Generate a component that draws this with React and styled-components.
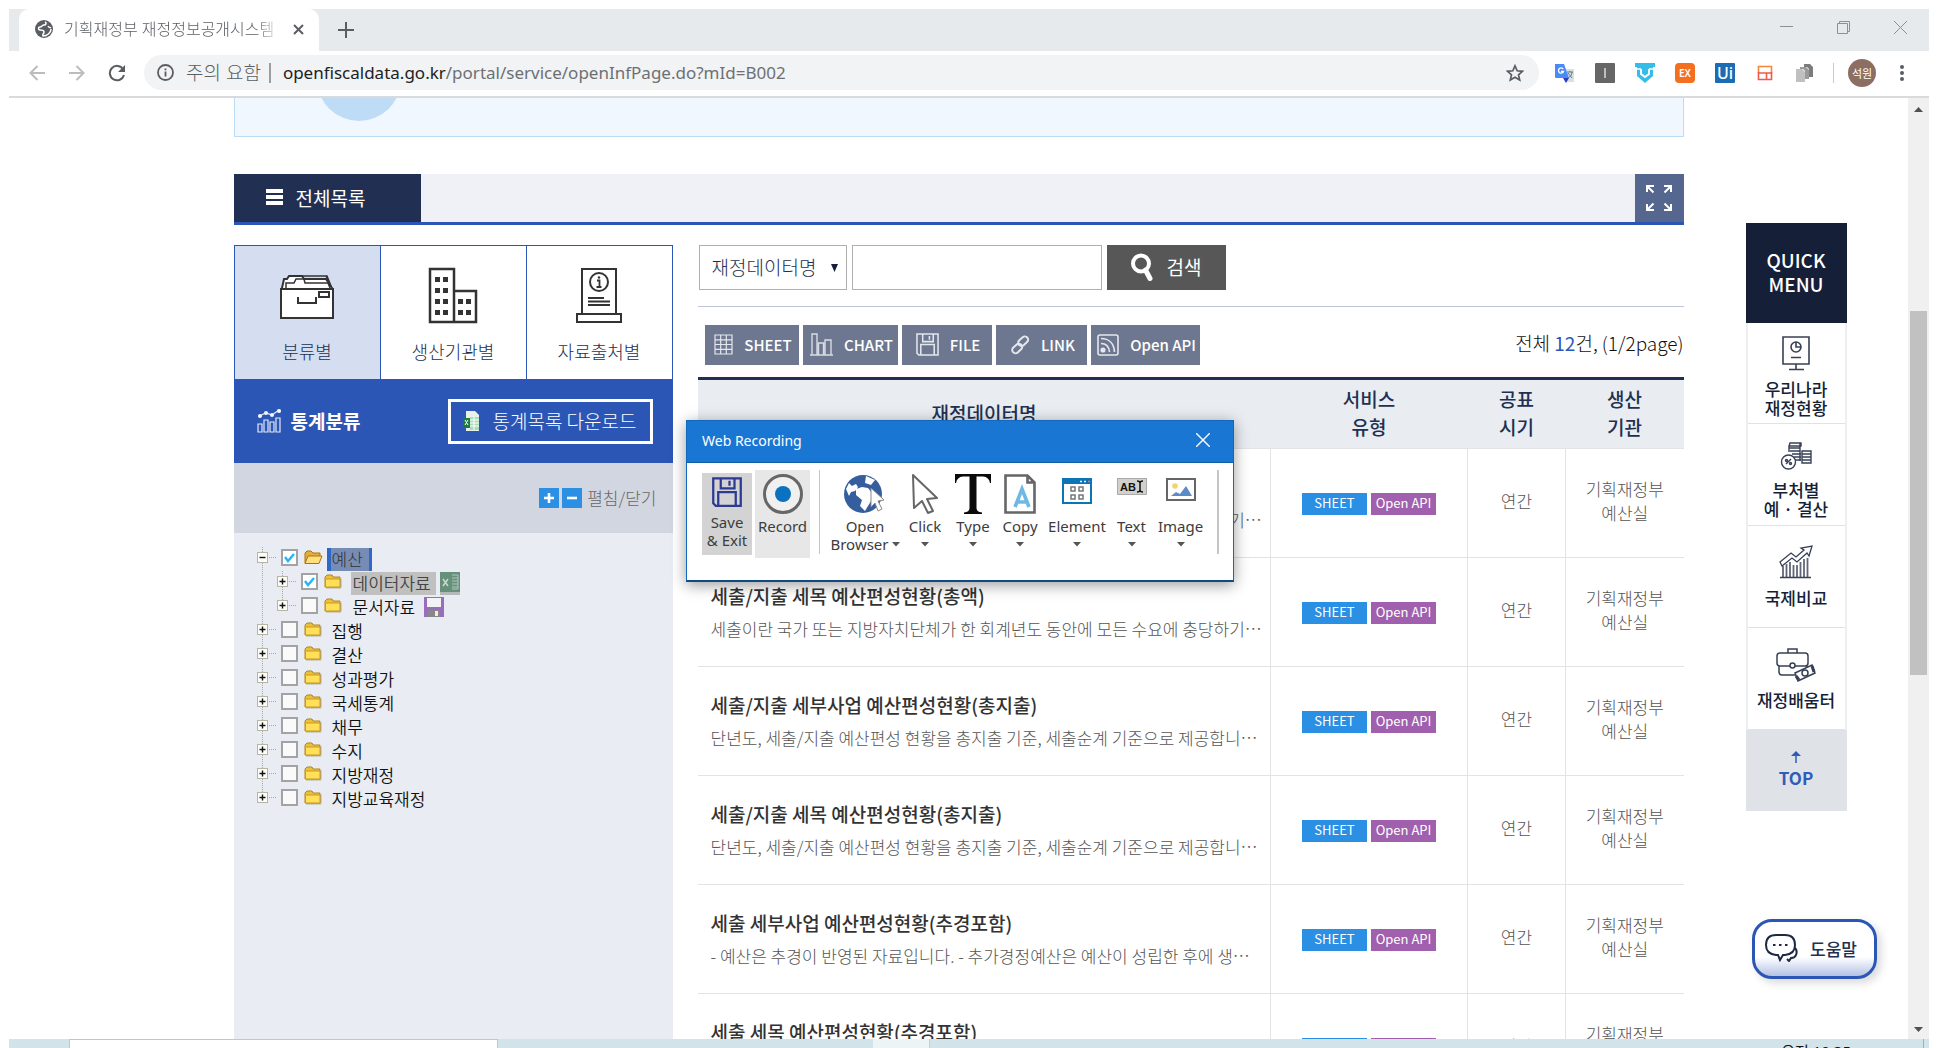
import React from "react";
import styled, { createGlobalStyle, css } from "styled-components";

const KR = `"Noto Sans CJK KR", sans-serif`;
const UI = `"Noto Sans", "Noto Sans CJK KR", sans-serif`;

const Global = createGlobalStyle`
  * { box-sizing: border-box; }
  body { margin: 0; background: #fff; font-family: ${KR}; }
  button, input, select { font-family: inherit; margin: 0; }
  button { border: 0; padding: 0; background: none; color: inherit; display: flex; align-items: center; justify-content: center; }
  svg { display: block; flex: none; }
  ul { list-style: none; margin: 0; padding: 0; }
  a { text-decoration: none; color: inherit; }
`;

/* ---------- browser frame ---------- */
const Frame = styled.div`
  height: 100vh;
  padding: 9px 9px 0;
  display: flex;
  flex-direction: column;
  overflow: hidden;
`;
const TabStrip = styled.header`
  flex: none;
  height: 42px;
  display: flex;
  background: #e6eaed;
  font-family: ${UI};
`;
const Tab = styled.div`
  width: 300px;
  margin-left: 10px;
  padding: 0 15px 2px 16px;
  border-radius: 10px 10px 0 0;
  background: #fff;
  display: flex;
  align-items: center;
  gap: 11px;
  color: #5a5e63;
`;
const TabTitle = styled.span`
  flex: 1;
  font-size: 16px;
  font-weight: 300;
  line-height: 24px;
  white-space: nowrap;
  overflow: hidden;
  mask-image: linear-gradient(90deg, #000 88%, transparent);
`;
const NewTab = styled.button`
  width: 54px;
  color: #5a5e63;
`;
const WindowButtons = styled.div`
  margin-left: auto;
  display: flex;
  align-items: center;
  gap: 44px;
  padding: 0 22px 6px 0;
  color: #8d9093;
`;
const AddressBar = styled.div`
  flex: none;
  height: 47px;
  padding: 0 25px 2px 16px;
  border-bottom: 2px solid #d8dade;
  display: flex;
  align-items: center;
  gap: 16px;
  color: #5a5e63;
  font-family: ${UI};
`;
const NavButton = styled.button`
  width: 24px;
  height: 24px;
  color: ${(p) => (p.$muted ? "#babcbe" : "#5a5e63")};
`;
const Omnibox = styled.div`
  flex: 1;
  height: 35px;
  border-radius: 18px;
  background: #f1f3f4;
  display: flex;
  align-items: center;
  padding: 0 15px 0 13px;
  margin-left: -1px;
  gap: 12px;
  font-size: 17px;
  line-height: 24px;
  white-space: nowrap;
`;
const SiteNotice = styled.span`
  font-size: 19px;
  font-weight: 300;
`;
const UrlText = styled.span`
  flex: 1;
  border-left: 2px solid #9b9ea1;
  padding-left: 12px;
  margin-left: -4px;
  line-height: 20px;
  color: #6c7074;
  b { font-weight: 400; color: #202124; }
`;
const Extensions = styled.div`
  display: flex;
  align-items: center;
  gap: 20px;
`;
const Avatar = styled.span`
  width: 28px;
  height: 28px;
  border-radius: 50%;
  background: #8d6e63;
  color: #fff;
  font-size: 11px;
  display: flex;
  align-items: center;
  justify-content: center;
`;
const BarRule = styled.i`
  width: 1px;
  height: 20px;
  background: #c8cacc;
  margin-left: -2px;
  margin-right: -6px;
`;

/* ---------- page ---------- */
const Viewport = styled.div`
  flex: 1;
  min-height: 0;
  display: flex;
`;
const Page = styled.div`
  flex: 1;
  min-width: 0;
  overflow: hidden;
  display: grid;
  grid-template-columns: minmax(0, 1fr) minmax(0, 1450px) minmax(0, 1fr);
`;
const Main = styled.main`
  grid-column: 2;
  display: flex;
  flex-direction: column;
  min-height: 0;
`;
const ScrollTrack = styled.div`
  width: 21px;
  background: #f0f0f0;
  display: flex;
  flex-direction: column;
  align-items: center;
  padding: 9px 2px 7px;
  color: #505050;
`;
const ScrollThumb = styled.div`
  width: 17px;
  height: 364px;
  margin-top: 199px;
  margin-bottom: auto;
  background: #c1c1c1;
`;
const Banner = styled.div`
  flex: none;
  height: 39px;
  overflow: hidden;
  background: #f0f7ff;
  border: 1px solid #bcdcf5;
  border-top: 0;
  padding-left: 82px;
`;
const BannerDisc = styled.div`
  width: 84px;
  height: 84px;
  margin-top: -61px;
  border-radius: 50%;
  background: #bfdcf7;
`;
const SectionBar = styled.div`
  flex: none;
  margin-top: 37px;
  height: 51px;
  display: flex;
  justify-content: space-between;
  background: #eff1f6;
  border-bottom: 3px solid #2c56b5;
`;
const SectionTab = styled.h2`
  margin: 0;
  width: 187px;
  padding: 0 0 2px 32px;
  background: #213052;
  color: #fff;
  display: flex;
  align-items: center;
  gap: 13px;
  font-size: 19px;
  font-weight: 400;
`;
const Expand = styled.button`
  width: 49px;
  background: #56678f;
`;
const Columns = styled.div`
  flex: 1;
  min-height: 0;
  margin-top: 20px;
  display: flex;
  gap: 25px;
`;

/* ---------- left column ---------- */
const Side = styled.section`
  width: 439px;
  flex: none;
  display: flex;
  flex-direction: column;
  background: #e9edf3;
`;
const KindTabs = styled.div`
  display: grid;
  grid-template-columns: repeat(3, 1fr);
  gap: 1px;
  padding: 1px 1px 0;
  background: #2c56b5;
`;
const KindTab = styled.button`
  height: 133px;
  padding-top: 18px;
  flex-direction: column;
  justify-content: flex-start;
  gap: 13px;
  background: ${(p) => (p.$on ? "#d5ddf0" : "#fff")};
  color: #213052;
  font-size: 18px;
  line-height: 28px;
  font-weight: 300;
`;
const Blue = styled.div`
  height: 84px;
  padding: 0 20px 0 23px;
  background: #2c56b5;
  color: #fff;
  display: flex;
  align-items: center;
  gap: 10px;
  h3 { margin: 0; padding-bottom: 2px; font-size: 19px; font-weight: 700; }
`;
const Download = styled.button`
  width: 205px;
  height: 45px;
  margin-left: auto;
  padding-bottom: 1px;
  border: 3px solid #fff;
  gap: 13px;
  font-size: 19px;
  font-weight: 300;
  white-space: nowrap;
`;
const Toggle = styled.div`
  height: 70px;
  padding-right: 16px;
  background: #d2d6e0;
  display: flex;
  align-items: center;
  justify-content: flex-end;
  gap: 3px;
  color: #666;
  font-size: 17px;
  font-weight: 300;
  span { margin: 0 0 2px 2px; }
`;
const Square = styled.button`
  width: 20px;
  height: 20px;
  background: #2b90e3;
`;
const Tree = styled.ul`
  padding: 14px 0 0 21px;
  font-size: 17px;
  line-height: 24px;
`;
const TreeRow = styled.li`
  height: 24px;
  display: flex;
  align-items: center;
  padding-left: ${(p) => (p.$level ? 20 : 0)}px;
  background-image: ${(p) =>
    p.$level ? "repeating-linear-gradient(#aaa 0 1px, transparent 1px 2px)" : "none"};
  background-size: 1px 100%;
  background-position: 7px 0;
  background-repeat: no-repeat;
`;
const Check = styled.input`
  appearance: none;
  width: 17px;
  height: 17px;
  border: 2px solid #a3a3a3;
  background: #fafafa;
  flex: none;
  &&& { margin: 0 6px 3px 4px; }
  &:checked {
    background: #fff
      url("data:image/svg+xml,%3Csvg xmlns='http://www.w3.org/2000/svg' viewBox='0 0 13 13'%3E%3Cpath d='M2 6l3 4 6-7' fill='none' stroke='%2322b8f5' stroke-width='2.4'/%3E%3C/svg%3E");
  }
`;
const FolderBox = styled.span`
  margin-bottom: 4px;
`;
const TreeLabel = styled.label`
  margin-left: 4px;
  padding: 0 5px;
  height: 23px;
  line-height: 22px;
  color: #111;
  font-weight: ${(p) => (p.$state === "selected" ? 300 : 350)};
  ${(p) => p.$state === "selected" && css`
    background: #768cb4;
    border: solid #2f69c8;
    border-width: 0 3px 0 4px;
    color: #333;
    padding: 0 6px 0 1px;
  `}
  ${(p) => p.$state === "marked" && css`
    background: #c0c0c0;
    color: #444;
    padding: 0 5px 0 2px;
    margin-left: 8px;
  `}
  ${(p) => p.$state === "plain" && css`
    padding: 0 5px 0 2px;
    margin-left: 8px;
  `}
`;
const Tail = styled.span`
  margin-left: 4px;
`;

/* ---------- right column ---------- */
const Content = styled.section`
  flex: 1;
  min-width: 0;
  overflow: hidden;
`;
const SearchForm = styled.form`
  display: flex;
  gap: 5px;
  padding: 0 0 16px 1px;
  border-bottom: 1px solid #bfc5d8;
`;
const SelectWrap = styled.div`
  display: grid;
  width: 148px;
  height: 45px;
  border: 1px solid #b0b0b0;
  align-items: center;
  > * { grid-area: 1 / 1; }
  svg { justify-self: end; margin-right: 8px; pointer-events: none; }
`;
const Select = styled.select`
  appearance: none;
  height: 43px;
  border: 0;
  background: transparent;
  padding: 0 0 2px 12px;
  font-size: 19px;
  font-weight: 300;
  color: #213052;
`;
const Field = styled.input`
  width: 250px;
  height: 45px;
  border: 1px solid #b0b0b0;
  padding: 0 10px;
  font-size: 17px;
`;
const SearchButton = styled.button`
  width: 119px;
  height: 45px;
  padding-bottom: 2px;
  background: #575757;
  color: #fff;
  font-size: 19px;
  gap: 14px;
`;
const Tools = styled.div`
  display: flex;
  align-items: center;
  padding: 18px 0 12px 7px;
  gap: 4px;
`;
const Tool = styled.button`
  width: ${(p) => p.$w}px;
  height: 40px;
  padding: 0 0 1px 3px;
  background: #6d7890;
  color: #fff;
  font-size: 15px;
  font-weight: 500;
  gap: 11px;
`;
const Count = styled.p`
  margin: 0 0 4px auto;
  font-size: 19px;
  line-height: 28px;
  color: #111;
  font-weight: 300;
  b { color: #2c56b5; font-weight: 400; }
`;
const Table = styled.table`
  width: 100%;
  border-collapse: collapse;
  table-layout: fixed;
  border-top: 3px solid #213052;
`;
const Th = styled.th`
  height: 70px;
  padding: 0 0 3px;
  background: #e9edf1;
  border-bottom: 1px solid #e3e3e6;
  color: #213052;
  font-size: 19px;
  line-height: 28px;
  font-weight: 500;
`;
const Td = styled.td`
  height: 109px;
  padding: 0 0 4px;
  border-bottom: 1px solid #e3e3e6;
  border-left: 1px solid #e3e3e6;
  text-align: center;
  font-size: 17px;
  line-height: 24px;
  font-weight: 300;
  color: #555;
  &:first-child { border-left: 0; text-align: left; padding: 0 12px 0 13px; }
`;
const DataTitle = styled.a`
  display: block;
  font-size: 19px;
  line-height: 32px;
  font-weight: 500;
  color: #333;
  white-space: nowrap;
`;
const DataNote = styled.p`
  margin: 0;
  font-size: 17px;
  line-height: 33px;
  color: #555;
  white-space: nowrap;
`;
const Badges = styled.div`
  display: flex;
  justify-content: center;
  gap: 4px;
  padding-top: 6px;
`;
const Badge = styled.a`
  width: 65px;
  height: 22px;
  line-height: 20px;
  font-size: 13px;
  font-weight: 400;
  color: #fff;
  background: ${(p) => (p.$api ? "#a160ad" : "#2b90e3")};
`;

/* ---------- quick menu ---------- */
const Quick = styled.aside`
  grid-column: 3;
  padding: 125px 0 0 62px;
`;
const QuickNav = styled.nav`
  width: 101px;
  border: solid #edeef2;
  border-width: 0 2px;
`;
const QuickHead = styled.h2`
  margin: 0 -2px;
  height: 100px;
  padding-bottom: 2px;
  display: flex;
  align-items: center;
  justify-content: center;
  text-align: center;
  background: #151f38;
  color: #fff;
  font-size: 19px;
  line-height: 24px;
  font-weight: 500;
`;
const QuickItem = styled.a`
  height: ${(p) => (p.$first ? 101 : 102)}px;
  padding-top: ${(p) => (p.$single ? 18 : 12)}px;
  border-bottom: 1px solid #dfe2e7;
  display: flex;
  flex-direction: column;
  align-items: center;
  gap: 8px;
  text-align: center;
  white-space: pre-line;
  font-size: 17px;
  line-height: 19px;
  font-weight: 500;
  color: #151f38;
  svg { opacity: 0.85; }
`;
const QuickTop = styled.a`
  height: 81px;
  margin: 0 -2px;
  display: flex;
  flex-direction: column;
  align-items: center;
  justify-content: center;
  gap: 3px;
  background: #dfe2e7;
  color: #2f5bbb;
  font-size: 17px;
  line-height: 24px;
  font-weight: 700;
`;
const Help = styled.button`
  width: 125px;
  height: 60px;
  margin: 108px 0 0 6px;
  padding: 0 6px 2px 0;
  border: 3px solid #2c56b5;
  border-radius: 20px;
  background: linear-gradient(#fff 65%, #b4c2e4);
  box-shadow: 4px 4px 8px rgba(0, 0, 0, 0.15);
  color: #213052;
  font-size: 17px;
  font-weight: 500;
  gap: 12px;
`;

/* ---------- recorder dialog ---------- */
const Dialog = styled.div`
  position: absolute;
  left: 686px;
  top: 420px;
  width: 548px;
  height: 162px;
  border: 1px solid #1268bd;
  border-bottom: 2px solid #104a86;
  background: #fff;
  box-shadow: 0 3px 14px rgba(0, 0, 0, 0.4);
  font-family: ${UI};
`;
const DialogHead = styled.div`
  height: 42px;
  padding: 0 23px 3px 15px;
  display: flex;
  align-items: center;
  justify-content: space-between;
  background: #1a76d3;
  border-bottom: 1px solid #0f5ca8;
  color: #fff;
  font-size: 14px;
`;
const DialogTools = styled.div`
  display: flex;
  align-items: flex-start;
  padding: 7px 14px 0 15px;
`;
const DialogTool = styled.button`
  width: ${(p) => p.$w}px;
  height: ${(p) => p.$h || 88}px;
  margin: ${(p) => p.$m || "0"};
  padding-top: 4px;
  flex-direction: column;
  justify-content: flex-start;
  color: #3c3c3c;
  font-size: 15px;
  line-height: 17px;
  background: ${(p) => p.$bg || "none"};
  white-space: nowrap;
  span { display: flex; align-items: center; gap: 3px; height: 18px; }
`;
const ToolIcon = styled.div`
  height: ${(p) => p.$h || 43}px;
  padding-top: ${(p) => p.$t || 0}px;
`;
const DialogRule = styled.i`
  width: ${(p) => p.$w}px;
  height: 84px;
  background: #c6c6c6;
`;

/* ---------- taskbar ---------- */
const Taskbar = styled.footer`
  flex: none;
  height: 9px;
  overflow: hidden;
  display: flex;
  background: #d3e3ea;
  padding-left: 60px;
  font-family: ${UI};
`;
const TaskSearch = styled.div`
  width: 429px;
  background: #fff;
  border: 1px solid #c2c6c8;
  border-width: 1px 1px 0;
`;
const TaskActive = styled.div`
  width: 57px;
  margin-left: 375px;
  background: #ecf4f6;
  border-right: 1px solid #c2d0d4;
`;
const Clock = styled.time`
  margin-left: auto;
  padding: 3px 72px 0 0;
  border-right: 1px solid #9fb0b6;
  margin-right: 5px;
  font-size: 15px;
  line-height: 18px;
  color: #111;
`;

/* ---------- icons ---------- */
const Svg = ({ w, h = w, vb, children, ...r }) => (
  <svg width={w} height={h} viewBox={vb || `0 0 ${w} ${h}`} fill="none" aria-hidden="true" {...r}>
    {children}
  </svg>
);
const Line = (p) => <Svg stroke="currentColor" strokeWidth="2" {...p} />;

const Folder = ({ open }) => (
  <FolderBox>
    <Svg w={19} h={15}>
      {open ? (
        <>
          <path d="M1 13V3l2-2h4l2 2h7v3" fill="#e3ad3c" stroke="#a8740f" />
          <path d="M1 13.500L4 6h14l-3 7.500z" fill="#ffdf7d" stroke="#a8740f" />
        </>
      ) : (
        <>
          <path d="M1 13V3l2-2h5l1 2h7v10z" fill="#f0c033" stroke="#b3851d" />
          <path d="M1.500 5h14.500v8H1.500z" fill="#ffe058" stroke="#c99a26" />
          <path d="M17 4.500V14H2" stroke="#9c8a5c" opacity=".6" />
        </>
      )}
    </Svg>
  </FolderBox>
);
const NodeBox = styled.span`
  margin-left: 2px;
`;
const Node = ({ open, last }) => (
  <NodeBox>
    <Svg w={20} h={24}>
      <path d={`M5.500 0V${last ? 12 : 24}`} stroke="#a8a8a8" strokeDasharray="1 1" />
      <path d="M12 10.500h7" stroke="#a8a8a8" strokeDasharray="1 1" />
      <rect x=".5" y="5.500" width="10" height="10" fill="#fdfdf8" stroke="#b5b5a5" />
      <path d={open ? "M2.500 10.500h6" : "M2.500 10.500h6M5.500 7.500v6"} stroke="#111" strokeWidth="1.400" />
    </Svg>
  </NodeBox>
);
const Drawer = () => (
  <Svg w={54} h={60} stroke="#333" strokeWidth="2">
    <path d="M2 24L4 15h3l2-3h13l2 3h22l6 9v2H2z" fill="#fff" />
    <path d="M6 24v-5h8l2-4h8l1 4h23l2 5M46 12l5 11" strokeWidth="1.500" />
    <path d="M20 12h27l4 10" strokeWidth="1.500" />
    <rect x="1" y="25" width="52" height="29" fill="#fff" />
    <path d="M18 33v6h18v-6" />
    <rect x="39" y="28" width="10" height="5" />
  </Svg>
);
const Building = () => (
  <Svg w={50} h={60}>
    <path d="M2 5h24v53H2zM26 27h22v31H26" stroke="#333" strokeWidth="2.500" />
    <g fill="#333">
      {[13, 24, 35, 46].map((y) => (
        <path key={y} d={`M7 ${y}h5v5H7zM15 ${y}h5v5h-5z`} />
      ))}
      {[35, 46].map((y) => (
        <path key={y} d={`M30 ${y}h5v5h-5zM38 ${y}h5v5h-5z`} />
      ))}
    </g>
  </Svg>
);
const Stand = () => (
  <Svg w={46} h={60} stroke="#333" strokeWidth="2">
    <path d="M6 50V5h34v45M1 50h44v8H1z" />
    <circle cx="23" cy="18" r="9" />
    <path d="M21 16.500h2.500V23M20.500 23h5M12 34h16M12 37.500h22M12 41h22" strokeWidth="1.800" />
    <circle cx="23" cy="13.500" r="1.200" fill="#333" stroke="none" />
  </Svg>
);
const Magnifier = () => (
  <Svg w={22} h={28} stroke="#fff" strokeWidth="4">
    <circle cx="10" cy="10.500" r="8" />
    <path d="M14.500 17l4.500 8.500" strokeLinecap="round" strokeWidth="5" />
  </Svg>
);
const Floppy = ({ w = 23, c = "#e4e7ee", sw = 1.6 }) => (
  <Svg w={w} vb="0 0 24 24" stroke={c} strokeWidth={sw}>
    <path d="M1 1h22v22H3l-2-2zM7 1v8h11V1M5 23V12h14v11M14 3v4" />
  </Svg>
);
const toolIcons = {
  SHEET: <Svg w={19} h={21} stroke="#e4e7ee"><path d="M1 1h17v19H1zM6.700 1v19M12.300 1v19M1 5.800h17M1 10.500h17M1 15.300h17" strokeWidth="1.200" /></Svg>,
  CHART: <Svg w={23} h={23} stroke="#d7dbe4" strokeWidth="1.400"><path d="M0 22h23M2 22V1h5v21M8.500 22V10h5v12M15 22V7h6v15" /></Svg>,
  FILE: <Floppy />,
  LINK: <Svg w={20} h={22} stroke="#e4e7ee" strokeWidth="2"><rect x="10" y="1.500" width="6.500" height="11" rx="3.200" transform="rotate(48 13 7)" /><rect x="3.500" y="9" width="6.500" height="11" rx="3.200" transform="rotate(48 7 15)" /></Svg>,
  "Open API": <Svg w={22} stroke="#e4e7ee" strokeWidth="1.600"><rect x="1" y="1" width="20" height="20" rx="2" /><path d="M4 4.500c8 0 13 5 13.500 13.500M4 9.500c5 0 8 3 8.500 8.500" /><circle cx="6" cy="16" r="1.800" fill="#e4e7ee" /></Svg>,
};
const quickIcons = [
  <Line w={30} h={36} key="a" strokeWidth="1.600"><path d="M2 2h26v27H2zM15 29v5M8 34.500h15M10 22.500h10" /><circle cx="15" cy="12" r="5" /><path d="M15 7v5h5" /></Line>,
  <Line w={32} h={36} key="b" strokeWidth="1.400"><path d="M10 7h11v3H9zM9 12h11M10 15h10M12 18h9M14 21h7M15 24h6M20 7v18M9 10v6M22 15h9v12h-9zM22 18h9M22 21h9M22 24h9" /><circle cx="8.500" cy="26" r="7" fill="#fff" /><path d="M6 28l5-5" /><circle cx="6.500" cy="24.500" r="1" /><circle cx="10.500" cy="27.500" r="1" /></Line>,
  <Line w={34} h={36} key="c" strokeWidth="1.300"><path d="M1 18l11-9 5 4 8-7-3-2 11-2-3 10-2-3-10 9-5-4-10 8zM1 33.500h31" /><path d="M4 33V22M7.500 33V20M11 33V18M14.500 33V21M18 33V21M21.500 33V18M25 33V15M28.500 33V14" strokeWidth="1.800" opacity=".8" /></Line>,
  <Line w={40} h={36} key="d" strokeWidth="1.500"><path d="M12 7V3h9v4M4 7h25q3 0 3 3v7q0 3-3 3H19M14 20H4q-3 0-3-3v-7q0-3 3-3M3 20v6q0 3 3 3h13M31 20v1" /><circle cx="16.500" cy="19.500" r="2.500" /><path d="M19 27l17-8 3 8-17 8z" fill="#fff" /><circle cx="29" cy="27" r="3" /><path d="M20 30l3 4M36 20l2 6" strokeWidth="3" /></Line>,
];
const Caret = () => <Svg w={8} h={5}><path d="M0 0h8L4 4.500z" fill="#555" /></Svg>;

/* ---------- data ---------- */
const tree = [
  { t: "예산", open: true, checked: true, state: "selected" },
  { t: "데이터자료", level: 1, checked: true, state: "marked", tail: "xls" },
  { t: "문서자료", level: 1, state: "plain", tail: "disk", last: true },
  { t: "집행" }, { t: "결산" }, { t: "성과평가" }, { t: "국세통계" },
  { t: "채무" }, { t: "수지" }, { t: "지방재정" }, { t: "지방교육재정", last: true },
];
const rows = [
  ["세출/지출 세부사업 예산편성현황(총액)", "세출이란 국가 또는 지방자치단체가 한 회계년도 동안에 모든 수요에 충당하기⋯"],
  ["세출/지출 세목 예산편성현황(총액)", "세출이란 국가 또는 지방자치단체가 한 회계년도 동안에 모든 수요에 충당하기⋯"],
  ["세출/지출 세부사업 예산편성현황(총지출)", "단년도, 세출/지출 예산편성 현황을 총지출 기준, 세출순계 기준으로 제공합니⋯"],
  ["세출/지출 세목 예산편성현황(총지출)", "단년도, 세출/지출 예산편성 현황을 총지출 기준, 세출순계 기준으로 제공합니⋯"],
  ["세출 세부사업 예산편성현황(추경포함)", "- 예산은 추경이 반영된 자료입니다. - 추가경정예산은 예산이 성립한 후에 생⋯"],
  ["세출 세목 예산편성현황(추경포함)", "- 예산은 추경이 반영된 자료입니다. - 추가경정예산은 예산이 성립한 후에 생⋯"],
];
const tools = [["SHEET", 94], ["CHART", 95], ["FILE", 90], ["LINK", 91], ["Open API", 109]];
const quick = ["우리나라\n재정현황", "부처별\n예 · 결산", "국제비교", "재정배움터"];

const Chrome = () => (
  <>
    <TabStrip>
      <Tab>
        <Svg w={18}><circle cx="9" cy="9" r="9" fill="#5a5e63" /><path d="M10 2c2 1 1 3-1 3s-2 2-4 2-2 3 0 3 4 0 4 2-2 2-1 4c4 0 8-3 8-7M13 6c1 2 2 1 3 2" stroke="#fff" strokeWidth="1.500" /></Svg>
        <TabTitle>기획재정부 재정정보공개시스템</TabTitle>
        <button aria-label="탭 닫기"><Line w={11}><path d="M1 1l9 9M10 1l-9 9" /></Line></button>
      </Tab>
      <NewTab aria-label="새 탭"><Line w={16}><path d="M8 0v16M0 8h16" /></Line></NewTab>
      <WindowButtons>
        <button aria-label="최소화"><Line w={13} strokeWidth="1"><path d="M0 5.500h13" /></Line></button>
        <button aria-label="이전 크기로"><Line w={13} strokeWidth="1"><path d="M.5 2.500h10v10H.5zM2.500 2.500v-2h10v10h-2" /></Line></button>
        <button aria-label="닫기"><Line w={13} strokeWidth="1"><path d="M0 0l13 13M13 0L0 13" /></Line></button>
      </WindowButtons>
    </TabStrip>
    <AddressBar>
      <NavButton $muted aria-label="뒤로"><Line w={16}><path d="M16 8H2M8.500 1L1.500 8l7 7" /></Line></NavButton>
      <NavButton $muted aria-label="앞으로"><Line w={16}><path d="M0 8h14M7.500 1l7 7-7 7" /></Line></NavButton>
      <NavButton aria-label="새로고침"><Line w={18}><path d="M15 5A7.200 7.200 0 1 0 16 11" /><path d="M17 1v7h-7z" fill="currentColor" stroke="none" /></Line></NavButton>
      <Omnibox>
        <Line w={17} strokeWidth="1.800"><circle cx="8.500" cy="8.500" r="7.500" /><path d="M8.500 7.500v5M8.500 4.500v1.800" /></Line>
        <SiteNotice>주의 요함</SiteNotice>
        <UrlText><b>openfiscaldata.go.kr</b>/portal/service/openInfPage.do?mId=B002</UrlText>
        <Line w={18} strokeWidth="1.700"><path d="M9 1.800l2.200 5 5.300.5-4 3.500 1.200 5.300L9 13.300l-4.700 2.800 1.200-5.300-4-3.500 5.300-.5z" /></Line>
      </Omnibox>
      <Extensions>
        <Svg w={20}><path d="M8 6h11v13H10z" fill="#dcdfe2" /><path d="M0 1h9l5 14H1q-1 0-1-1z" fill="#4a8af4" /><path d="M8 15h6l-3 5z" fill="#2b3cc4" /><path d="M8.200 6a2.600 2.600 0 1 0 .3 2.500H6" stroke="#fff" strokeWidth="1.300" /><path d="M12 9h6M15 8v1M17 9c0 3-2 5-4 6M13 10l4 5" stroke="#54808a" /></Svg>
        <Svg w={20}><rect width="20" height="20" rx="1" fill="#666" /><path d="M10 5v10" stroke="#ddd" strokeWidth="1.500" /></Svg>
        <Svg w={20}><path d="M0 0h20v4h-2v9l-8 7-8-7V4H0z" fill="#35bdea" /><path d="M6 6v5l4 3 4-3V6" stroke="#fff" strokeWidth="2" /><path d="M0 6h6M14 6h6" stroke="#fff" strokeWidth="1.500" /></Svg>
        <Svg w={20}><rect width="20" height="20" rx="4" fill="#f46f20" /><text x="10" y="14" textAnchor="middle" fontFamily="Noto Sans" fontSize="10" fontWeight="600" fill="#fff">EX</text></Svg>
        <Svg w={20}><rect width="20" height="20" rx="1" fill="#1c6bb5" /><text x="10" y="16" textAnchor="middle" fontFamily="Noto Sans" fontSize="16" fontWeight="500" fill="#fff">Ui</text></Svg>
        <Svg w={20}><path d="M3.500 10V3.500h13V10" stroke="#f7863b" strokeWidth="1.600" /><path d="M3.500 9v7.500h13V9M3 10h14M11.500 10v6" stroke="#f2594b" strokeWidth="1.600" /></Svg>
        <Svg w={20}><path d="M1 6h6l3 3v10H1z" fill="#c0c0c0" /><path d="M5 4h6l3 3v9h-4V8L8 6H5z" fill="#9a9a9a" /><path d="M9 1h6l3 3v10h-4V6l-2-2H9z" fill="#7c7c7c" /></Svg>
        <BarRule />
        <Avatar>석원</Avatar>
        <Svg w={4} h={18} style={{ marginLeft: 4 }}><g fill="#5a5e63"><circle cx="2" cy="3" r="2" /><circle cx="2" cy="9" r="2" /><circle cx="2" cy="15" r="2" /></g></Svg>
      </Extensions>
    </AddressBar>
  </>
);

const LeftPanel = () => (
  <Side>
    <KindTabs>
      <KindTab $on><Drawer />분류별</KindTab>
      <KindTab><Building />생산기관별</KindTab>
      <KindTab><Stand />자료출처별</KindTab>
    </KindTabs>
    <Blue>
      <Svg w={24} h={24} stroke="#e3eaf8" strokeWidth="1.200"><path d="M1 23V15h4v8zM7 23V11h4v12zM13 23V13h4v10zM19 23V9h4v14z" /><path d="M2 7l7-3 6 2 7-5" /><g fill="#fff"><circle cx="3" cy="7" r="1.500" /><circle cx="9" cy="4" r="1.500" /><circle cx="15" cy="6" r="1.500" /><circle cx="22" cy="2" r="1.500" /></g></Svg>
      <h3>통계분류</h3>
      <Download>
        <Svg w={16} h={20}><path d="M3 0h9l4 4v16H3z" fill="#e9efe9" /><path d="M7 6h9v13H7z" fill="#a9dcba" /><path d="M7 9h9M7 12h9M7 15h9M11 6v13" stroke="#fff" /><path d="M0 7h7v10H0z" fill="#1d7a45" /><path d="M2 9l3 5M5 9l-3 5" stroke="#fff" /></Svg>
        통계목록 다운로드
      </Download>
    </Blue>
    <Toggle>
      <Square aria-label="펼침"><Svg w={10} stroke="#fff" strokeWidth="2.600"><path d="M5 0v10M0 5h10" /></Svg></Square>
      <Square aria-label="닫기"><Svg w={10} stroke="#fff" strokeWidth="2.600"><path d="M0 5h10" /></Svg></Square>
      <span>펼침/닫기</span>
    </Toggle>
    <Tree>
      {tree.map((n, i) => (
        <TreeRow key={n.t} $level={n.level}>
          <Node open={n.open} last={n.last} />
          <Check type="checkbox" id={`n${i}`} defaultChecked={!!n.checked} />
          <Folder open={n.open} />
          <TreeLabel htmlFor={`n${i}`} $state={n.state}>{n.t}</TreeLabel>
          {n.tail === "xls" && <Tail><Svg w={20} h={23}><path d="M0 0h20v23H0z" fill="#b5b9b7" /><path d="M0 0h20v20H0z" fill="#65907a" /><path d="M3 7l5 7M8 7l-5 7" stroke="#c9d6ce" strokeWidth="1.600" /><path d="M12 3h6v14h-6M12 6h6M12 9h6M12 12h6M12 15h6" stroke="#b4c4ba" /></Svg></Tail>}
          {n.tail === "disk" && <Tail><Svg w={20}><path d="M0 0h20v20H0z" fill="#9a6cbd" /><path d="M3 1h14v9H3z" fill="#f3f3f6" /><path d="M4 13h12v7H4z" fill="#888" /><path d="M11 14h3v5h-3z" fill="#eee" /></Svg></Tail>}
        </TreeRow>
      ))}
    </Tree>
  </Side>
);

const RightPanel = () => (
  <Content>
    <SearchForm onSubmit={(e) => e.preventDefault()}>
      <SelectWrap>
        <Select aria-label="검색 항목"><option>재정데이터명</option></Select>
        <Svg w={7} h={8}><path d="M0 0h7L3.500 8z" fill="#151f38" /></Svg>
      </SelectWrap>
      <Field type="text" aria-label="검색어" />
      <SearchButton><Magnifier />검색</SearchButton>
    </SearchForm>
    <Tools>
      {tools.map(([t, w]) => <Tool key={t} $w={w}>{toolIcons[t]}{t}</Tool>)}
      <Count>전체 <b>12</b>건, (1/2page)</Count>
    </Tools>
    <Table>
      <colgroup><col /><col style={{ width: 197 }} /><col style={{ width: 98 }} /><col style={{ width: 118 }} /></colgroup>
      <thead>
        <tr><Th>재정데이터명</Th><Th>서비스<br />유형</Th><Th>공표<br />시기</Th><Th>생산<br />기관</Th></tr>
      </thead>
      <tbody>
        {rows.map(([t, d]) => (
          <tr key={t}>
            <Td><DataTitle href="#">{t}</DataTitle><DataNote>{d}</DataNote></Td>
            <Td><Badges><Badge href="#">SHEET</Badge><Badge href="#" $api>Open API</Badge></Badges></Td>
            <Td>연간</Td>
            <Td>기획재정부<br />예산실</Td>
          </tr>
        ))}
      </tbody>
    </Table>
  </Content>
);

const Recorder = () => (
  <Dialog role="dialog" aria-label="Web Recording">
    <DialogHead>
      Web Recording
      <button aria-label="Close"><Line w={14} strokeWidth="1.400"><path d="M0 0l14 14M14 0L0 14" /></Line></button>
    </DialogHead>
    <DialogTools>
      <DialogTool $w={50} $h={82} $m="3px 3px 0 0" $bg="#d3d3d3"><ToolIcon $h={36}><Floppy w={30} c="#2d3a94" sw={1.8} /></ToolIcon><span>Save</span><span>&amp; Exit</span></DialogTool>
      <DialogTool $w={55} $m="0 9px 0 0" $bg="#e7e7e7"><ToolIcon><Svg w={40}><circle cx="20" cy="20" r="18.500" stroke="#666" strokeWidth="3" fill="#f0f0f0" /><circle cx="20" cy="20" r="8" fill="#0a72c0" /></Svg></ToolIcon><span>Record</span></DialogTool>
      <DialogRule $w={1} />
      <DialogTool $w={64} $m="0 0 0 13px"><ToolIcon><Svg w={42} h={40}><circle cx="19" cy="20" r="19" fill="#345e9e" /><path d="M2 15l3-6 3 3 4-2 2 3-3 4-4 1-2 4zM12 15l6-2 6 1 4 5-1 8-6 10-5-5 2-6-6-5zM22 2l9 4-4 5-6-2z" fill="#fff" /><path d="M27 14l13 12-6 1 4 8-4 2-3-8-4 4z" fill="#fff" stroke="#888" /></Svg></ToolIcon><span>Open</span><span>Browser<Caret /></span></DialogTool>
      <DialogTool $w={56}><ToolIcon><Svg w={28} h={40}><path d="M2 1l24 23-10 1 6 12-5 2-6-12-8 7z" stroke="#666" strokeWidth="2" strokeLinejoin="round" /></Svg></ToolIcon><span>Click</span><span><Caret /></span></DialogTool>
      <DialogTool $w={40}><ToolIcon><Svg w={36} h={40}><path d="M0 0h36v9h-1q-1-6-7-6.500h-6.500V34q0 4 5.500 4.500V40H9v-1.500q5.500-.5 5.500-4.500V2.500H8Q2 3 1 9H0z" fill="#0a0a0a" /></Svg></ToolIcon><span>Type</span><span><Caret /></span></DialogTool>
      <DialogTool $w={54}><ToolIcon><Svg w={32} h={40}><path d="M1.500 1.500h22l7 7v30h-29zM23.500 1.500v7h7" stroke="#666" strokeWidth="2.600" /><path d="M11 33l7-18 7 18M13.500 28h9" stroke="#6fb8e6" strokeWidth="3.600" /></Svg></ToolIcon><span>Copy</span><span><Caret /></span></DialogTool>
      <DialogTool $w={60}><ToolIcon $t={4}><Svg w={30} h={26}><rect x="1" y="1" width="28" height="24" fill="#fff" stroke="#0d74b5" strokeWidth="2" /><path d="M1 1h28v5H1z" fill="#0d74b5" /><path d="M18 3.500h2M22 3.500h2" stroke="#fff" strokeWidth="1.500" /><path d="M26 3.500h2" stroke="#f66" strokeWidth="1.500" /><path d="M9 9h4v4H9zM17 9h4v4h-4zM9 17h4v4H9zM17 17h4v4h-4z" stroke="#777" strokeWidth="1.500" /></Svg></ToolIcon><span>Element</span><span><Caret /></span></DialogTool>
      <DialogTool $w={49}><ToolIcon $t={4}><Svg w={30} h={17}><rect x=".5" y=".5" width="29" height="16" fill="#d0d0cc" stroke="#aaa" /><text x="3" y="13" fontFamily="Liberation Sans" fontSize="11" fontWeight="700" fill="#111">AB</text><path d="M20 3q3 0 3 2v7q0 2-3 2M26 3q-3 0-3 2M26 14q-3 0-3-2" stroke="#111" strokeWidth="1.500" /></Svg></ToolIcon><span>Text</span><span><Caret /></span></DialogTool>
      <DialogTool $w={49}><ToolIcon $t={4}><Svg w={30} h={23}><rect x="1" y="1" width="28" height="21" fill="#fff" stroke="#666" strokeWidth="2" /><circle cx="9" cy="8" r="2.800" fill="#f3d36b" /><path d="M5 18l5-4 4 2 6-8 6 10z" fill="#5b8bc9" /></Svg></ToolIcon><span>Image</span><span><Caret /></span></DialogTool>
      <DialogRule $w={2} style={{ marginLeft: "auto" }} />
    </DialogTools>
  </Dialog>
);

export default function App() {
  return (
    <Frame>
      <Global />
      <Chrome />
      <Viewport>
        <Page>
          <Main>
            <Banner><BannerDisc /></Banner>
            <SectionBar>
              <SectionTab><Svg w={17} h={16}><path d="M0 2h17M0 8h17M0 14h17" stroke="#fff" strokeWidth="4" /></Svg>전체목록</SectionTab>
              <Expand aria-label="전체 화면"><Svg w={26} stroke="#fff" strokeWidth="2"><path d="M1 7V1h7M1.500 1.500l6 6M25 7V1h-7M24.500 1.500l-6 6M1 19v6h7M1.500 24.500l6-6M25 19v6h-7M24.500 24.500l-6-6" /></Svg></Expand>
            </SectionBar>
            <Columns>
              <LeftPanel />
              <RightPanel />
            </Columns>
          </Main>
          <Quick>
            <QuickNav>
              <QuickHead>QUICK<br />MENU</QuickHead>
              {quick.map((t, i) => (
                <QuickItem key={t} href="#" $first={i === 0} $single={i > 1}>{quickIcons[i]}{t}</QuickItem>
              ))}
              <QuickTop href="#"><Svg w={10} h={12}><path d="M5 12V4" stroke="#2f5bbb" strokeWidth="1.500" /><path d="M0 5l5-5 5 5z" fill="#2f5bbb" /></Svg>TOP</QuickTop>
            </QuickNav>
            <Help>
              <Svg w={33} h={28} stroke="#1d2947" strokeWidth="2"><path d="M29 13q4 3 2 8-1 3-5 3l-2 3-2-2" fill="#fff" /><path d="M11 1h9q10 0 10 10 0 9-10 10h-2l-3 5-2-5h-2Q1 20 1 11 1 1 11 1z" fill="#fff" /><path d="M8 11h2.500M14 11h2.500M20 11h2.500" /></Svg>
              도움말
            </Help>
          </Quick>
        </Page>
        <ScrollTrack>
          <Svg w={9} h={5}><path d="M0 5L4.500 0 9 5z" fill="#505050" /></Svg>
          <ScrollThumb />
          <Svg w={9} h={5}><path d="M0 0h9L4.500 5z" fill="#505050" /></Svg>
        </ScrollTrack>
      </Viewport>
      <Taskbar><TaskSearch /><TaskActive /><Clock>오전 10:35</Clock></Taskbar>
      <Recorder />
    </Frame>
  );
}
